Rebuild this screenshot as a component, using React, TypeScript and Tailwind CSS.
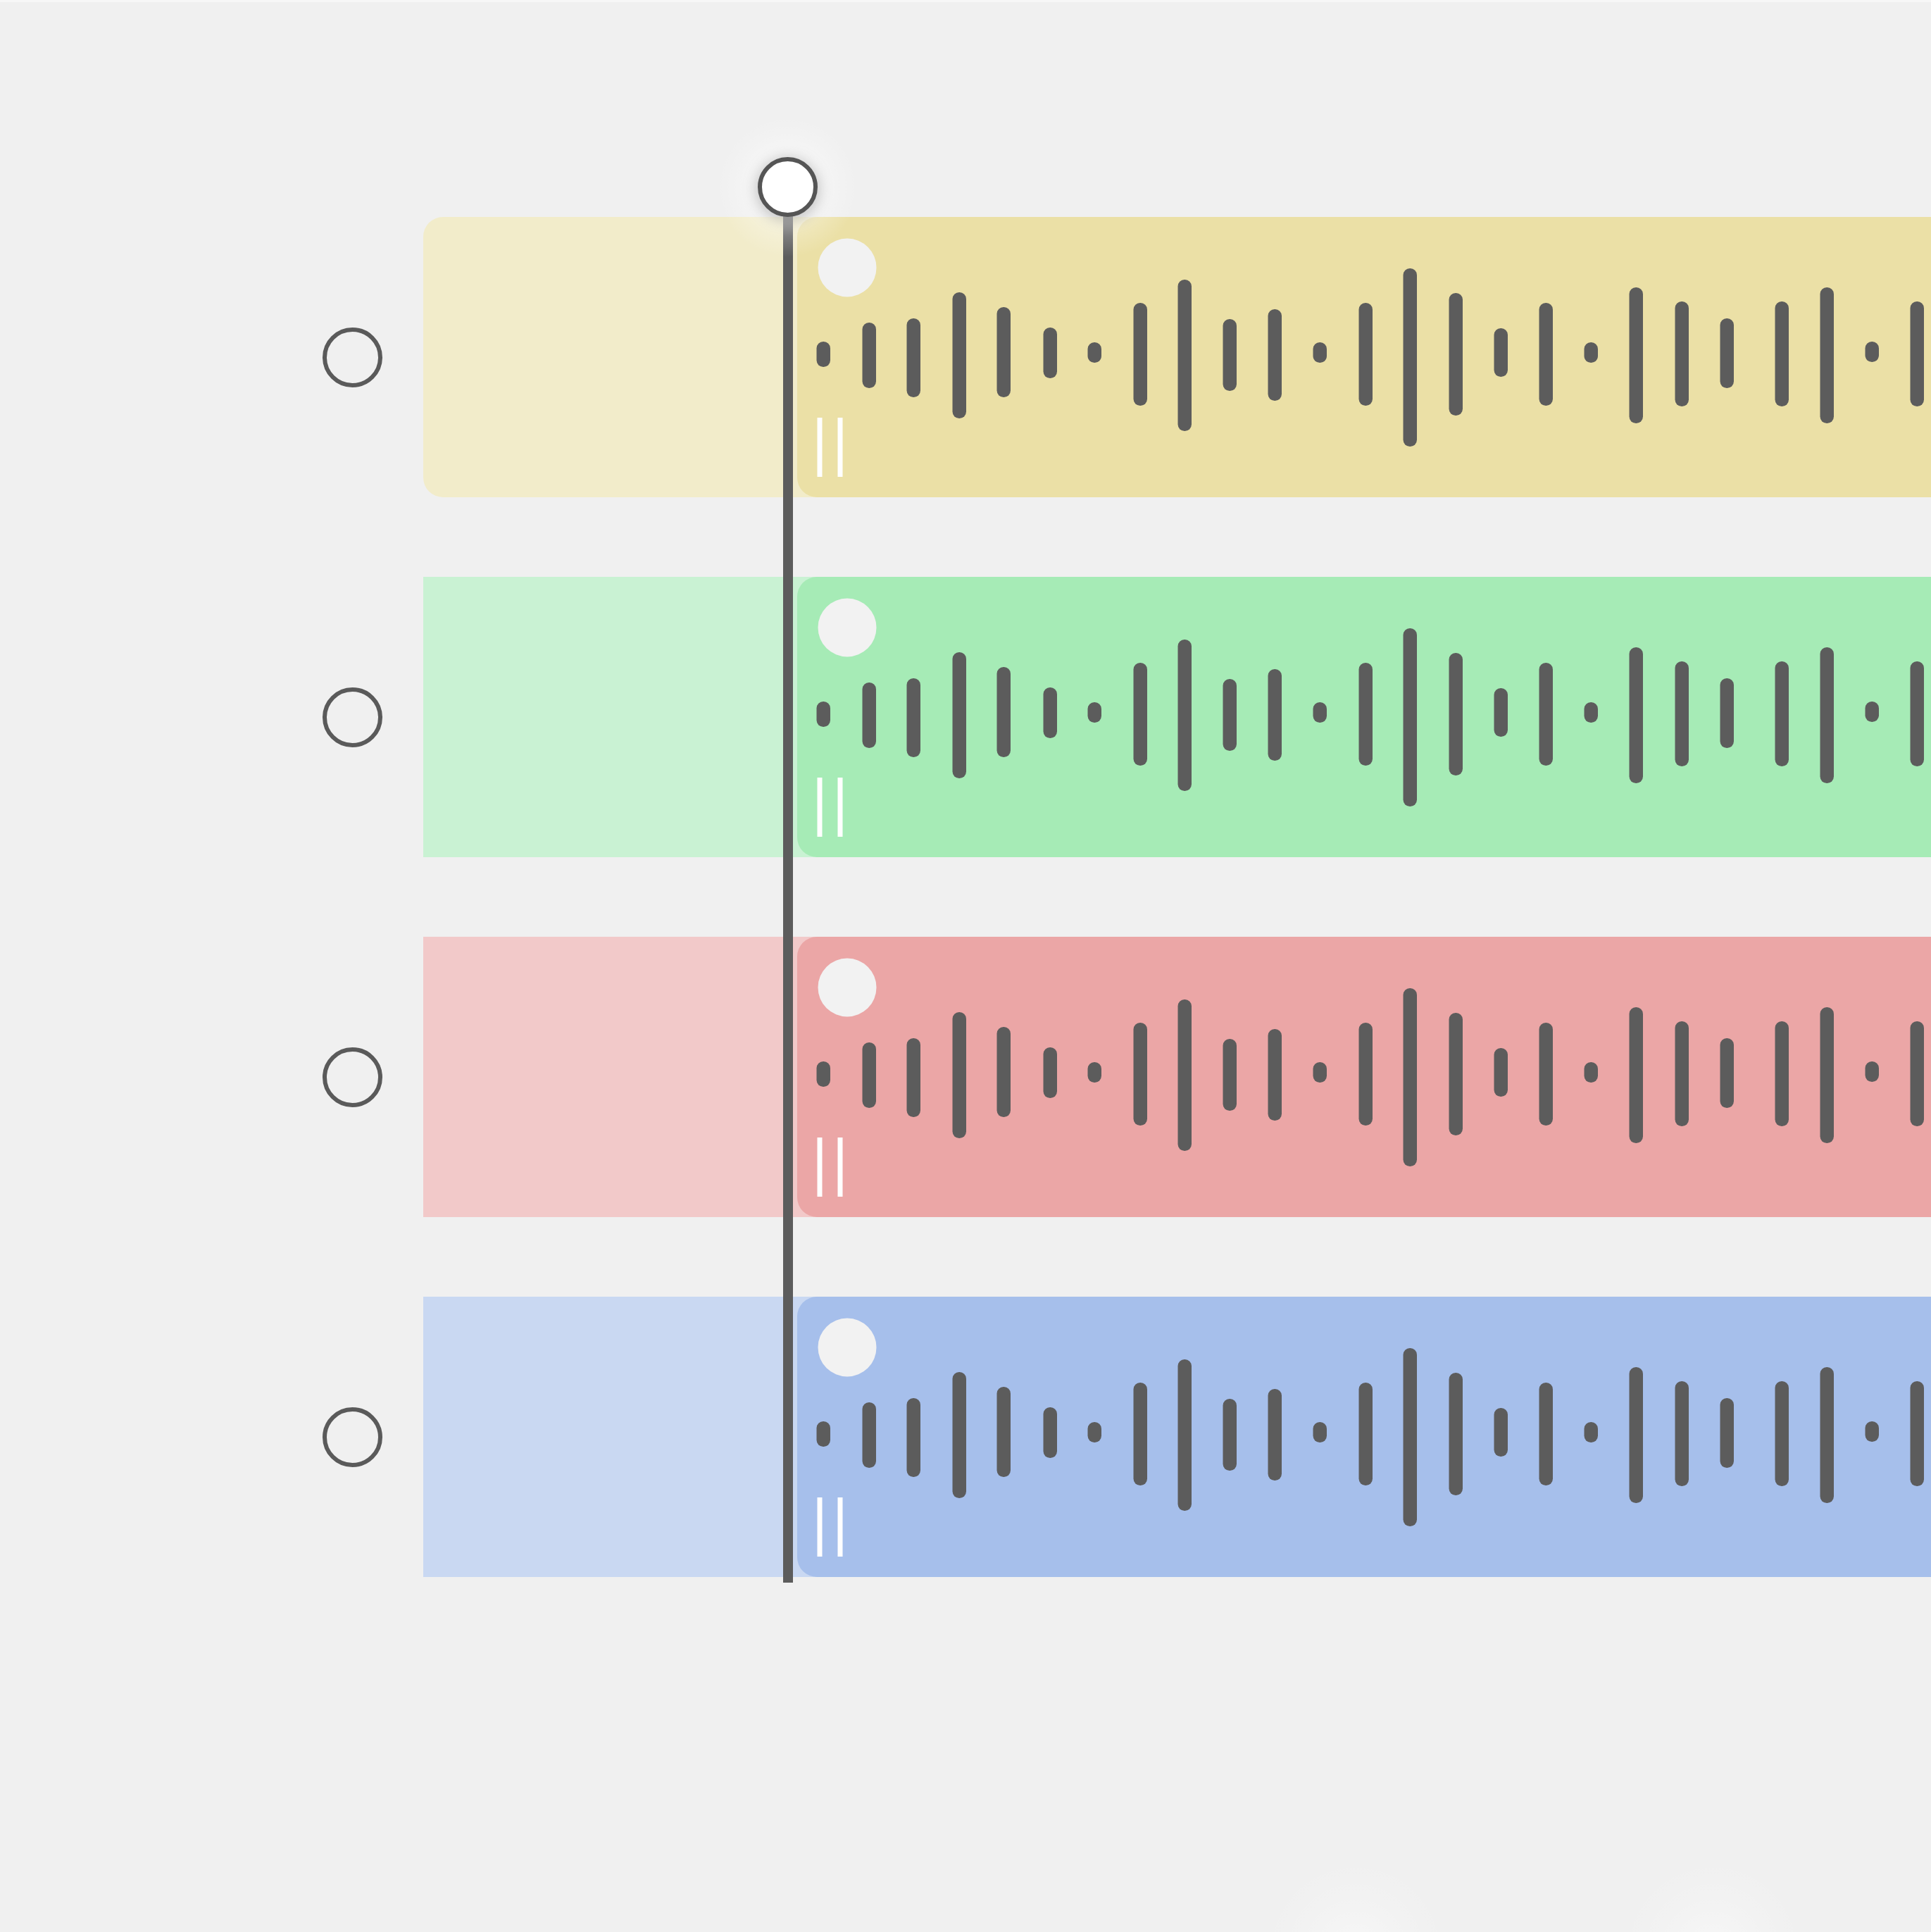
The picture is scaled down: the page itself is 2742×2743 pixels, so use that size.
import React from "react";

type Bar = { x: number; y1: number; y2: number };

const BARS: Bar[] = [
  { x: 37, y1: 177, y2: 213 },
  { x: 102, y1: 150, y2: 243 },
  { x: 165, y1: 144, y2: 256 },
  { x: 230, y1: 107, y2: 286 },
  { x: 293, y1: 128, y2: 256 },
  { x: 359, y1: 157, y2: 229 },
  { x: 422, y1: 178, y2: 207 },
  { x: 487, y1: 122, y2: 268 },
  { x: 550, y1: 89, y2: 304 },
  { x: 614, y1: 145, y2: 247 },
  { x: 678, y1: 131, y2: 261 },
  { x: 742, y1: 178, y2: 207 },
  { x: 807, y1: 122, y2: 268 },
  { x: 870, y1: 73, y2: 326 },
  { x: 935, y1: 108, y2: 282 },
  { x: 999, y1: 158, y2: 227 },
  { x: 1063, y1: 122, y2: 268 },
  { x: 1127, y1: 178, y2: 207 },
  { x: 1191, y1: 100, y2: 293 },
  { x: 1256, y1: 120, y2: 269 },
  { x: 1320, y1: 144, y2: 243 },
  { x: 1398, y1: 120, y2: 269 },
  { x: 1462, y1: 100, y2: 293 },
  { x: 1526, y1: 177, y2: 206 },
  { x: 1590, y1: 120, y2: 269 },
];

type Track = { light: string; dark: string; rounded: boolean };

function Waveform() {
  return (
    <svg
      className="absolute left-0 top-0"
      width={1610}
      height={398}
      viewBox="0 0 1610 398"
    >
      <circle cx={71} cy={72} r={41.5} fill="#f2f2f2" />
      <rect x={28.5} y={285} width={7} height={84} fill="#ffffff" />
      <rect x={57.5} y={285} width={7} height={84} fill="#ffffff" />
      {BARS.map((b, i) => (
        <rect
          key={i}
          x={b.x - 9.5}
          y={b.y1}
          width={19.5}
          height={b.y2 - b.y1}
          rx={9.5}
          ry={9.5}
          fill="#5c5c5c"
        />
      ))}
    </svg>
  );
}

function Row({ light, dark, rounded }: Track) {
  return (
    <div className="flex h-[398px] items-center">
      <div className="flex w-[601px] items-center pl-[458px]">
        <div className="h-[85px] w-[85px] rounded-full border-[6px] border-[#5a5a5a]" />
      </div>
      <div
        className={
          rounded
            ? "flex h-full flex-1 rounded-l-[28px]"
            : "flex h-full flex-1"
        }
        style={{ backgroundColor: light }}
      >
        <div className="w-[531px] shrink-0" />
        <div
          className="relative h-full flex-1 overflow-hidden rounded-l-[28px]"
          style={{ backgroundColor: dark }}
        >
          <Waveform />
        </div>
      </div>
    </div>
  );
}

const TRACKS: Track[] = [
  { light: "#f2ecca", dark: "#ebe0a6", rounded: true },
  { light: "#c9f2d3", dark: "#a6ebb6", rounded: false },
  { light: "#f2c9c9", dark: "#eba6a6", rounded: false },
  { light: "#c9d8f2", dark: "#a6bfeb", rounded: false },
];

export default function App() {
  return (
    <div className="relative h-[2743px] w-[2742px] overflow-hidden bg-[#f0f0f0]">
      <div className="h-[3px] w-full bg-[#f7f7f7]" />
      <div className="flex flex-col gap-[113px] pt-[305px]">
        {TRACKS.map((t, i) => (
          <Row key={i} {...t} />
        ))}
      </div>

      {/* playhead line */}
      <div className="absolute left-[1112px] top-[300px] h-[1947px] w-[14px] bg-[#5c5c5c]" />
      {/* glow around the knob */}
      <div className="absolute left-[1018px] top-[165px] h-[200px] w-[200px] rounded-full bg-[radial-gradient(circle_closest-side,rgba(255,255,255,0.55)_42%,rgba(255,255,255,0.2)_70%,rgba(255,255,255,0)_100%)]" />
      {/* knob */}
      <div className="absolute left-[1076px] top-[223px] h-[85px] w-[85px] rounded-full border-[6px] border-[#555555] bg-white shadow-[0_3px_22px_rgba(0,0,0,0.28)]" />

      {/* faint ripples at the bottom */}
      <div className="absolute left-[1795px] top-[2640px] h-[260px] w-[260px] rounded-full bg-[radial-gradient(circle_closest-side,rgba(255,255,255,0.45)_0%,rgba(255,255,255,0.15)_60%,rgba(255,255,255,0)_100%)]" />
      <div className="absolute left-[2302px] top-[2640px] h-[260px] w-[260px] rounded-full bg-[radial-gradient(circle_closest-side,rgba(255,255,255,0.45)_0%,rgba(255,255,255,0.15)_60%,rgba(255,255,255,0)_100%)]" />
    </div>
  );
}
